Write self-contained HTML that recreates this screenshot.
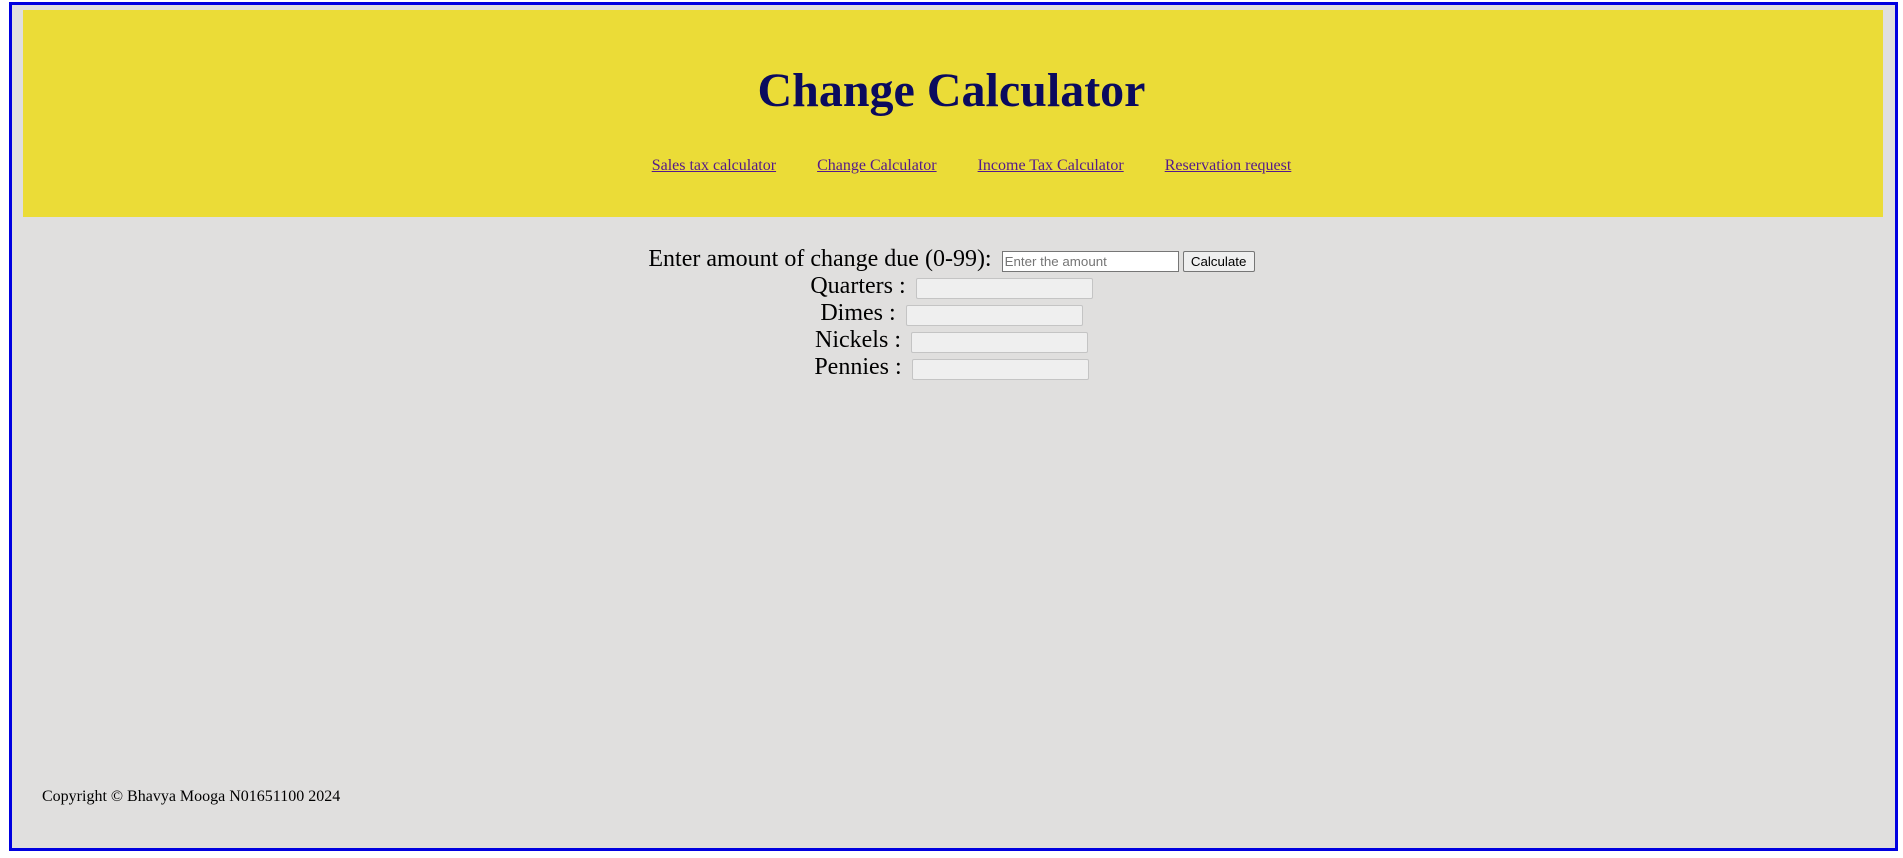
<!DOCTYPE html>
<html><head><meta charset="utf-8"><style>
html,body{margin:0;padding:0;background:#fff;}
body{width:1903px;height:858px;position:relative;overflow:hidden;font-family:"Liberation Serif","Times New Roman",serif;}
.box{position:absolute;left:9px;top:2px;width:1883px;height:843px;border:3px solid #0000e0;background:#e0dfde;}
.hdr{position:absolute;left:23px;top:10px;width:1860px;height:207px;background:#ebdc37;}
.t{position:absolute;left:0;width:1903px;text-align:center;white-space:nowrap;}
h1{margin:0;font-size:48px;font-weight:bold;color:#0b0b5e;line-height:56px;}
.nav a{color:#551a8b;font-size:16px;margin:0 20.5px;}
.row{font-size:24px;line-height:28px;color:#000;}
input,button{font-family:"Liberation Sans",Arial,sans-serif;font-size:13.33px;box-sizing:border-box;height:21px;vertical-align:baseline;margin:0;}
input{width:177px;padding:1px 2px;}
.amt{border:1px solid #767676;background:#fff;margin-left:4px;}
.amt::placeholder{color:#757575;}
.ro{border:1px solid #c4c4c4;background:#efefef;margin-left:4px;border-radius:2px;}
button{width:72px;border:1px solid #767676;background:#efefef;border-radius:2px;margin-left:4px;color:#000;padding:0 6px;}
.foot{position:absolute;left:42px;top:788px;font-size:16px;color:#000;white-space:nowrap;}
</style></head><body>
<div class="box"></div>
<div class="hdr"></div>
<div class="t" style="top:63px"><h1>Change Calculator</h1></div>
<div class="t nav" style="top:157px;padding-left:40px;box-sizing:border-box;"><a href="#">Sales tax calculator</a><a href="#">Change Calculator</a><a href="#">Income Tax Calculator</a><a href="#">Reservation request</a></div>
<div class="t row" style="top:245px">Enter amount of change due (0-99): <input class="amt" placeholder="Enter the amount"><button>Calculate</button></div>
<div class="t row" style="top:272px">Quarters : <input class="ro" readonly></div>
<div class="t row" style="top:299px">Dimes : <input class="ro" readonly></div>
<div class="t row" style="top:326px">Nickels : <input class="ro" readonly></div>
<div class="t row" style="top:353px">Pennies : <input class="ro" readonly></div>
<div class="foot">Copyright © Bhavya Mooga N01651100 2024</div>
</body></html>
